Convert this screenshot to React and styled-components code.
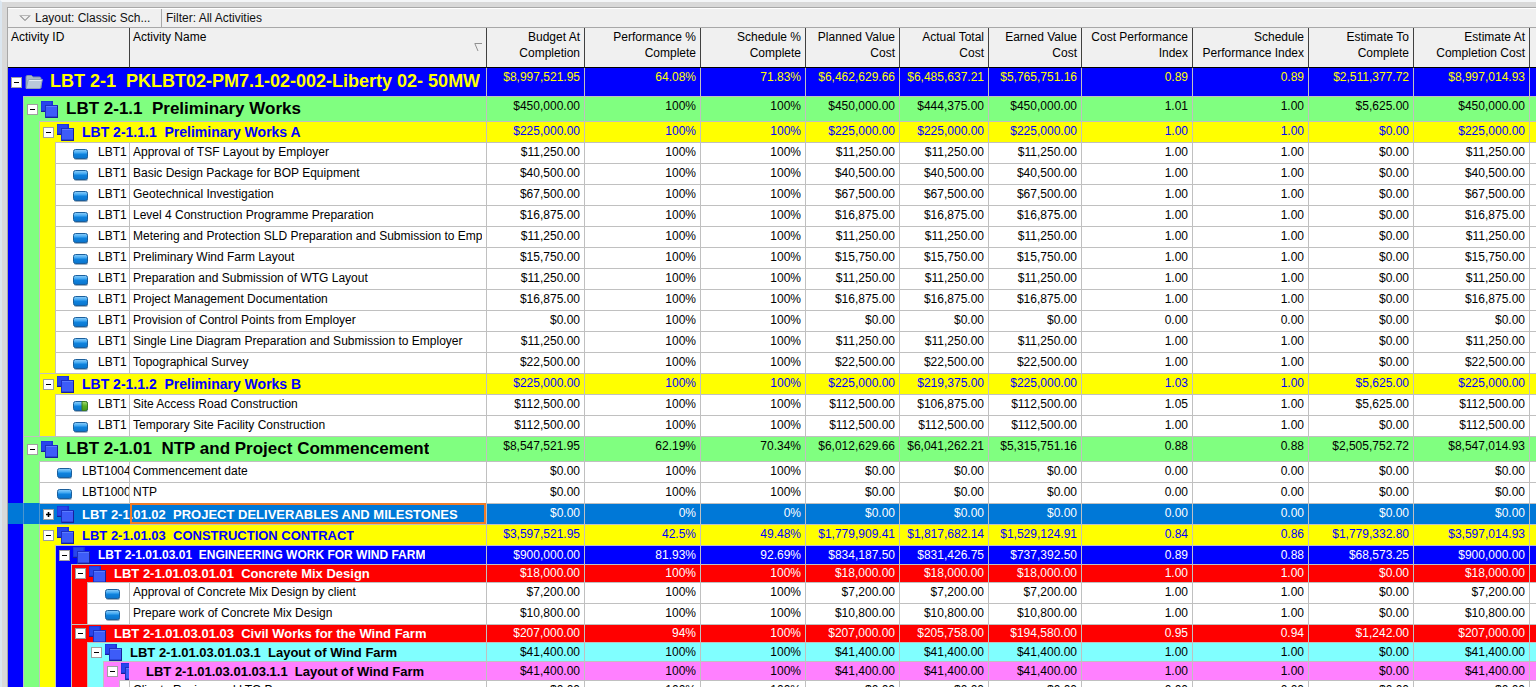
import React from 'react';
import styled, { createGlobalStyle, css } from 'styled-components';

const GlobalStyle = createGlobalStyle`
  * { box-sizing: border-box; }
  body {
    margin: 0;
    background: #d9d9d9;
    font-family: "Liberation Sans", Arial, sans-serif;
    font-size: 12px;
    color: #000;
    overflow: hidden;
  }
  svg { flex: none; }
`;

const RULE = '#c0c0c0';

const LEVELS = [
  { bg: '#0000ff', fg: '#ffff00', size: 18, height: 28 },
  { bg: '#80ff80', fg: '#000000', size: 17, height: 25 },
  { bg: '#ffff00', fg: '#0000ff', size: 13, height: 21 },
  { bg: '#0000ff', fg: '#ffffff', size: 12, height: 19 },
  { bg: '#ff0000', fg: '#ffffff', size: 13, height: 18 },
  { bg: '#80ffff', fg: '#000000', size: 13, height: 19 },
  { bg: '#ff80ff', fg: '#000000', size: 13, height: 19 },
];
const SELECTED_BG = '#0078d7';
const ACTIVITY_HEIGHT = 21;

/* ---------- frame ---------- */

const Frame = styled.main`
  height: 100vh;
  min-width: 1340px;
  padding: 5px 0 0 5px;
  border-top: 2px solid #f4f6f8;
  border-left: 2px solid #dbe6f0;
  background: #d9d9d9;
  overflow: hidden;
`;

const Panel = styled.section`
  height: 100%;
  border-top: 1px solid #a8a8a8;
  border-left: 1px solid #a8a8a8;
  background: #fff;
  overflow: hidden;
`;

const Toolbar = styled.div`
  display: flex;
  height: 20px;
  background: #f0f0f0;
  border-top: 1px solid #fff;
  border-bottom: 1px solid #a8a8a8;
`;

const ToolButton = styled.button`
  display: flex;
  align-items: center;
  gap: 4px;
  border: 0;
  background: none;
  color: #111;
  font: inherit;
  white-space: nowrap;
  padding: 0 4px;
`;

const LayoutButton = styled(ToolButton)`
  width: 154px;
  padding: 0 4px 0 11px;
  border-right: 1px solid #a8a8a8;
`;

/* ---------- table ---------- */

const Table = styled.table`
  width: 100%;
  table-layout: fixed;
  border-collapse: separate;
  border-spacing: 0;
`;

const Col = styled.col`
  width: ${(p) => (p.$w ? `${p.$w}px` : 'auto')};
`;

const HeadCell = styled.th`
  height: 40px;
  padding: 1px 4px 0 3px;
  background: #f0f0f0;
  border-right: 1px solid #404040;
  border-bottom: 1px solid #000;
  font-weight: normal;
  line-height: 16px;
  text-align: ${(p) => (p.$left ? 'left' : 'right')};
  vertical-align: top;
  white-space: nowrap;
  overflow: hidden;
  &:last-child { border-right: 0; }
`;

const HeadSplit = styled.div`
  display: flex;
  justify-content: space-between;
  svg { margin-top: 13px; }
`;

const Row = styled.tr`
  color: ${(p) => p.$fg};
  background: ${(p) => p.$bg};
`;

const cellRules = css`
  border-top: ${(p) => (p.$first ? '0' : `1px solid ${RULE}`)};
  border-right: 1px solid ${RULE};
`;

const Value = styled.td`
  ${cellRules}
  padding: 0 4px 0 0;
  height: ${(p) => p.$h}px;
  line-height: ${(p) => Math.min(p.$h, 20) - 1}px;
  text-align: right;
  vertical-align: top;
  white-space: nowrap;
  overflow: hidden;
  &:last-child { border-right: 0; }
`;

const NameCell = styled(Value)`
  padding: 0 4px 0 3px;
  text-align: left;
`;

const NameText = styled.div`
  overflow: hidden;
`;

const TreeCell = styled.td`
  position: relative;
  padding: 0;
  height: ${(p) => p.$h}px;
  border-right: 1px solid ${RULE};
  overflow: hidden;
`;

const Tree = styled.div`
  display: flex;
  height: ${(p) => p.$h}px;
  overflow: hidden;
`;

const Band = styled.span`
  flex: none;
  width: 16px;
  background: ${(p) => p.$bg};
  border-right: 1px solid ${(p) => (p.$dim ? '#4a96cf' : RULE)};
`;

const Label = styled.div`
  ${cellRules}
  border-right: 0;
  flex: 1;
  min-width: 0;
  display: flex;
  align-items: center;
`;

const GroupLabel = styled(Label)`
  padding-right: 4px;
`;

const ToggleSlot = styled.span`
  flex: none;
  display: flex;
  justify-content: center;
  width: 16px;
`;

const Toggle = styled.button`
  display: flex;
  width: 11px;
  height: 11px;
  padding: 0;
  border: 1px solid #a0a0a0;
  background: #fff;
`;

const GroupIcon = styled.span`
  flex: none;
  display: flex;
  width: ${(p) => (p.$clipped ? 9 : 26)}px;
  margin-right: ${(p) => (p.$clipped ? 17 : 0)}px;
  padding-left: 1px;
  overflow: hidden;
`;

const GroupName = styled.span`
  overflow: hidden;
  padding-bottom: ${(p) => (p.$size > 16 ? 2 : 0)}px;
  font-weight: bold;
  font-size: ${(p) => p.$size}px;
  line-height: ${(p) => p.$size + 4}px;
  white-space: pre;
`;

const ActivityIcon = styled.span`
  flex: none;
  display: flex;
  width: 42px;
  padding: 2px 0 0 17px;
`;

const ActivityId = styled.span`
  overflow: hidden;
  line-height: 19px;
  align-self: flex-start;
  white-space: nowrap;
`;

const FocusBox = styled.span`
  position: absolute;
  inset: 0 0 0 122px;
  border: 2px solid #f07c28;
  pointer-events: none;
`;

/* ---------- drawings ---------- */

const ToggleMark = ({ plus }) => (
  <svg width="9" height="9" viewBox="0 0 9 9" aria-hidden="true">
    <path d={plus ? 'M2 4.5H7M4.5 2V7' : 'M2 4.5H7'} stroke="#000" strokeWidth={plus ? 1.6 : 1} />
  </svg>
);

const Squares = () => (
  <svg width="17" height="18" viewBox="0 0 17 18" aria-hidden="true">
    <rect x="0" y="1" width="12" height="11" fill="#1a2fd6" />
    <rect x="0.5" y="1.5" width="10" height="9" fill="#2745ec" />
    <path d="M0 11.5H12" stroke="#1a1f9a" />
    <rect x="4" y="5" width="13" height="13" fill="#1b2fc0" />
    <rect x="5" y="6" width="11" height="10.5" fill="#3d5cf8" />
    <path d="M5 6.5H16" stroke="#5a7bff" />
    <path d="M5 17.5H17M16.5 6V17" stroke="#1a1f9a" />
  </svg>
);

const Folder = () => (
  <svg width="18" height="16" viewBox="0 0 18 16" aria-hidden="true">
    <path d="M1 14V3.2C1 2.2 1.5 1.5 2.4 1.5H6.5L8 3H14.5C15.4 3 16 3.6 16 4.4V14Z" fill="#a9b9c9" stroke="#7d91a8" />
    <path d="M1.2 14.5L3 6.5C3.2 5.8 3.6 5.5 4.3 5.5H17.4L15.6 13.6C15.5 14.2 15 14.5 14.4 14.5Z" fill="#b9c9da" stroke="#8fa3b8" />
    <path d="M4.2 6.5H16.5" stroke="#e4edf5" />
  </svg>
);

const Bar = ({ partial }) => (
  <svg width="15" height="11" viewBox="0 0 15 11" aria-hidden="true">
    <defs>
      <linearGradient id="bar-blue" x1="0" y1="0" x2="0" y2="1">
        <stop offset="0" stopColor="#8fd0fb" />
        <stop offset="0.4" stopColor="#3ba4f0" />
        <stop offset="0.5" stopColor="#0f83de" />
        <stop offset="1" stopColor="#0a74cc" />
      </linearGradient>
      <linearGradient id="bar-green" x1="0" y1="0" x2="0" y2="1">
        <stop offset="0" stopColor="#a5dc7a" />
        <stop offset="0.5" stopColor="#58b024" />
        <stop offset="1" stopColor="#479a18" />
      </linearGradient>
    </defs>
    <rect x="1" y="2" width="14" height="9" rx="2" fill="#9fb0c0" />
    <rect x="0.5" y="0.5" width="14" height="9" rx="2" fill="url(#bar-blue)" stroke="#1b5f9c" />
    {partial && <path d="M9 0.5H12.5a2 2 0 0 1 2 2V7.5a2 2 0 0 1 -2 2H9Z" fill="url(#bar-green)" stroke="#3d7d1c" />}
  </svg>
);

const DropMark = () => (
  <svg width="12" height="8" viewBox="0 0 12 8" aria-hidden="true">
    <path d="M1 1.5L6 6.5L11 1.5" fill="none" stroke="#666" />
    <path d="M1 1.5H11" stroke="#b8b8b8" />
  </svg>
);

const SortMark = () => (
  <svg width="8" height="10" viewBox="0 0 8 10" aria-hidden="true">
    <path d="M8 1.5H0.8L4 9" fill="none" stroke="#909090" />
  </svg>
);

/* ---------- data ---------- */

const COLUMNS = [
  { w: 98, lines: ['Budget At', 'Completion'] },
  { w: 116, lines: ['Performance %', 'Complete'] },
  { w: 105, lines: ['Schedule %', 'Complete'] },
  { w: 94, lines: ['Planned Value', 'Cost'] },
  { w: 89, lines: ['Actual Total', 'Cost'] },
  { w: 93, lines: ['Earned Value', 'Cost'] },
  { w: 111, lines: ['Cost Performance', 'Index'] },
  { w: 116, lines: ['Schedule', 'Performance Index'] },
  { w: 105, lines: ['Estimate To', 'Complete'] },
  { w: 116, lines: ['Estimate At', 'Completion Cost'] },
];

const group = (level, name, values, extra = {}) => ({ level, name, values: values.split(' '), ...extra });
const task = (level, id, name, values, extra = {}) => ({ level, id, name, values: values.split(' '), ...extra });
const done = (cost) => `${cost} 100% 100% ${cost} ${cost} ${cost} 1.00 1.00 $0.00 ${cost}`;
const ZERO = '$0.00 100% 100% $0.00 $0.00 $0.00 0.00 0.00 $0.00 $0.00';

const ROWS = [
  group(0, 'LBT 2-1  PKLBT02-PM7.1-02-002-Liberty 02- 50MW', '$8,997,521.95 64.08% 71.83% $6,462,629.66 $6,485,637.21 $5,765,751.16 0.89 0.89 $2,511,377.72 $8,997,014.93'),
  group(1, 'LBT 2-1.1  Preliminary Works', '$450,000.00 100% 100% $450,000.00 $444,375.00 $450,000.00 1.01 1.00 $5,625.00 $450,000.00'),
  group(2, 'LBT 2-1.1.1  Preliminary Works A', done('$225,000.00'), { size: 14 }),
  task(3, 'LBT1', 'Approval of TSF Layout by Employer', done('$11,250.00')),
  task(3, 'LBT1', 'Basic Design Package for BOP Equipment', done('$40,500.00')),
  task(3, 'LBT1', 'Geotechnical Investigation', done('$67,500.00')),
  task(3, 'LBT1', 'Level 4 Construction Programme Preparation', done('$16,875.00')),
  task(3, 'LBT1', 'Metering and Protection SLD Preparation and Submission to Employer', done('$11,250.00')),
  task(3, 'LBT1', 'Preliminary Wind Farm Layout', done('$15,750.00')),
  task(3, 'LBT1', 'Preparation and Submission of WTG Layout', done('$11,250.00')),
  task(3, 'LBT1', 'Project Management Documentation', done('$16,875.00')),
  task(3, 'LBT1', 'Provision of Control Points from Employer', ZERO),
  task(3, 'LBT1', 'Single Line Diagram Preparation and Submission to Employer', done('$11,250.00')),
  task(3, 'LBT1', 'Topographical Survey', done('$22,500.00')),
  group(2, 'LBT 2-1.1.2  Preliminary Works B', '$225,000.00 100% 100% $225,000.00 $219,375.00 $225,000.00 1.03 1.00 $5,625.00 $225,000.00', { size: 14 }),
  task(3, 'LBT1', 'Site Access Road Construction', '$112,500.00 100% 100% $112,500.00 $106,875.00 $112,500.00 1.05 1.00 $5,625.00 $112,500.00', { partial: true }),
  task(3, 'LBT1', 'Temporary Site Facility Construction', done('$112,500.00')),
  group(1, 'LBT 2-1.01  NTP and Project Commencement', '$8,547,521.95 62.19% 70.34% $6,012,629.66 $6,041,262.21 $5,315,751.16 0.88 0.88 $2,505,752.72 $8,547,014.93'),
  task(2, 'LBT1004', 'Commencement date', ZERO),
  task(2, 'LBT1000', 'NTP', ZERO),
  group(2, 'LBT 2-1.01.02  PROJECT DELIVERABLES AND MILESTONES', '$0.00 0% 0% $0.00 $0.00 $0.00 0.00 0.00 $0.00 $0.00', { selected: true }),
  group(2, 'LBT 2-1.01.03  CONSTRUCTION CONTRACT', '$3,597,521.95 42.5% 49.48% $1,779,909.41 $1,817,682.14 $1,529,124.91 0.84 0.86 $1,779,332.80 $3,597,014.93'),
  group(3, 'LBT 2-1.01.03.01  ENGINEERING WORK FOR WIND FARM', '$900,000.00 81.93% 92.69% $834,187.50 $831,426.75 $737,392.50 0.89 0.88 $68,573.25 $900,000.00'),
  group(4, 'LBT 2-1.01.03.01.01  Concrete Mix Design', done('$18,000.00')),
  task(5, '', 'Approval of Concrete Mix Design by client', done('$7,200.00')),
  task(5, '', 'Prepare work of Concrete Mix Design', done('$10,800.00')),
  group(4, 'LBT 2-1.01.03.01.03  Civil Works for the Wind Farm', '$207,000.00 94% 100% $207,000.00 $205,758.00 $194,580.00 0.95 0.94 $1,242.00 $207,000.00'),
  group(5, 'LBT 2-1.01.03.01.03.1  Layout of Wind Farm', done('$41,400.00')),
  group(6, 'LBT 2-1.01.03.01.03.1.1  Layout of Wind Farm', done('$41,400.00')),
  task(7, '', 'Clients Review and LTO P', ZERO),
];

/* ---------- rows ---------- */

const Bands = ({ count, selected }) =>
  LEVELS.slice(0, count).map((l, i) => <Band key={i} $bg={selected ? SELECTED_BG : l.bg} $dim={selected} />);

const Values = ({ values, height, first }) => (
  <>
    {values.map((v, i) => (
      <Value key={i} $h={height} $first={first}>{v}</Value>
    ))}
    <Value $h={height} $first={first} />
  </>
);

function GroupRow({ row }) {
  const level = LEVELS[row.level];
  const first = row.level === 0;
  return (
    <Row $bg={row.selected ? SELECTED_BG : level.bg} $fg={row.selected ? '#ffffff' : level.fg}>
      <TreeCell colSpan={2} $h={level.height}>
        <Tree $h={level.height}>
          <Bands count={row.level} selected={row.selected} />
          <GroupLabel $first={first}>
            <ToggleSlot>
              <Toggle type="button" aria-label={row.selected ? 'Expand' : 'Collapse'}>
                <ToggleMark plus={row.selected} />
              </Toggle>
            </ToggleSlot>
            <GroupIcon $clipped={row.level === 6}>{first ? <Folder /> : <Squares />}</GroupIcon>
            <GroupName $size={row.size || level.size}>{row.name}</GroupName>
          </GroupLabel>
        </Tree>
        {row.selected && <FocusBox />}
      </TreeCell>
      <Values values={row.values} height={level.height} first={first} />
    </Row>
  );
}

function ActivityRow({ row }) {
  return (
    <Row $bg="#ffffff" $fg="#000000">
      <TreeCell $h={ACTIVITY_HEIGHT}>
        <Tree $h={ACTIVITY_HEIGHT}>
          <Bands count={row.level} />
          <Label>
            {row.level < 7 && <ActivityIcon><Bar partial={row.partial} /></ActivityIcon>}
            <ActivityId>{row.id}</ActivityId>
          </Label>
        </Tree>
      </TreeCell>
      <NameCell $h={ACTIVITY_HEIGHT}><NameText>{row.name}</NameText></NameCell>
      <Values values={row.values} height={ACTIVITY_HEIGHT} />
    </Row>
  );
}

export default function App() {
  return (
    <>
      <GlobalStyle />
      <Frame>
        <Panel>
          <Toolbar>
            <LayoutButton type="button"><DropMark />Layout: Classic Sch...</LayoutButton>
            <ToolButton type="button">Filter: All Activities</ToolButton>
          </Toolbar>
          <Table>
            <colgroup>
              <Col $w={122} />
              <Col />
              {COLUMNS.map((c, i) => <Col key={i} $w={c.w} />)}
              <Col $w={6} />
            </colgroup>
            <thead>
              <tr>
                <HeadCell $left>Activity ID</HeadCell>
                <HeadCell $left><HeadSplit>Activity Name<SortMark /></HeadSplit></HeadCell>
                {COLUMNS.map((c, i) => (
                  <HeadCell key={i}>{c.lines[0]}<br />{c.lines[1]}</HeadCell>
                ))}
                <HeadCell />
              </tr>
            </thead>
            <tbody>
              {ROWS.map((row, i) => (row.id === undefined ? <GroupRow key={i} row={row} /> : <ActivityRow key={i} row={row} />))}
            </tbody>
          </Table>
        </Panel>
      </Frame>
    </>
  );
}
